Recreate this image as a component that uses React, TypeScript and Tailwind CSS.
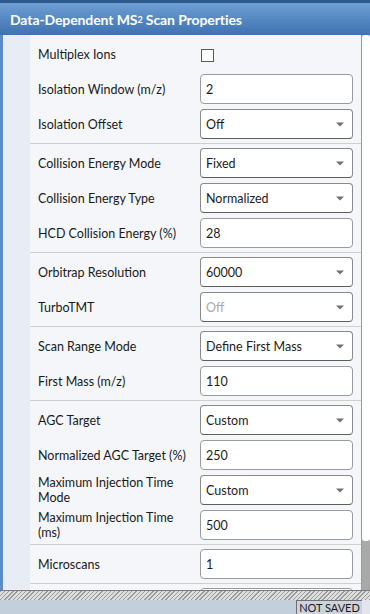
type Row = {
  label: string;
  kind: 'check' | 'input' | 'select';
  value?: string;
  disabled?: boolean;
};

const groups: Row[][] = [
  [
    { label: 'Multiplex Ions', kind: 'check' },
    { label: 'Isolation Window (m/z)', kind: 'input', value: '2' },
    { label: 'Isolation Offset', kind: 'select', value: 'Off' },
  ],
  [
    { label: 'Collision Energy Mode', kind: 'select', value: 'Fixed' },
    { label: 'Collision Energy Type', kind: 'select', value: 'Normalized' },
    { label: 'HCD Collision Energy (%)', kind: 'input', value: '28' },
  ],
  [
    { label: 'Orbitrap Resolution', kind: 'select', value: '60000' },
    { label: 'TurboTMT', kind: 'select', value: 'Off', disabled: true },
  ],
  [
    { label: 'Scan Range Mode', kind: 'select', value: 'Define First Mass' },
    { label: 'First Mass (m/z)', kind: 'input', value: '110' },
  ],
  [
    { label: 'AGC Target', kind: 'select', value: 'Custom' },
    { label: 'Normalized AGC Target (%)', kind: 'input', value: '250' },
    { label: 'Maximum Injection Time Mode', kind: 'select', value: 'Custom' },
    { label: 'Maximum Injection Time (ms)', kind: 'input', value: '500' },
  ],
  [{ label: 'Microscans', kind: 'input', value: '1' }],
  [{ label: '', kind: 'input', value: '' }],
];

function Control({ row }: { row: Row }) {
  if (row.kind === 'check') {
    return (
      <div className="w-[153px] h-[30px] flex items-center pl-[1px] pt-[3px]">
        <div className="w-[13px] h-[13px] border border-[#5a5a5a] bg-white" />
      </div>
    );
  }
  return (
    <div
      className={`w-[153px] h-[30px] flex items-center justify-between rounded-[4px] border bg-white pl-[5px] pr-[8px] ${
        row.kind === 'select' ? 'border-[#8a8a8a] border-b-[#5e5e5e]' : 'border-[#9a9a9a]'
      }`}
    >
      <span className={row.disabled ? 'text-[#a8a8a8]' : 'text-[#1c1c1c]'}>{row.value}</span>
      {row.kind === 'select' && (
        <svg width="8" height="5" viewBox="0 0 8 5">
          <path d="M0 0.5 L8 0.5 L4 4.5 Z" fill="#707070" />
        </svg>
      )}
    </div>
  );
}

export default function App() {
  return (
    <div
      className="w-[370px] h-[614px] flex flex-col overflow-hidden bg-[#f4f6f9] text-[12.5px] leading-[15px]"
      style={{ fontFamily: 'Lato, "Noto Sans", sans-serif' }}
    >
      <div className="h-[35px] shrink-0 border-t-[3px] border-[#2e5b8e] bg-gradient-to-b from-[#6e9fd4] to-[#3e72b1] flex items-center pl-[10px]">
        <span className="text-white text-[14px] font-bold tracking-[-0.1px]">
          Data-Dependent MS<sup className="text-[9px] relative -top-[2px]">2</sup> Scan Properties
        </span>
      </div>

      <div className="h-[555px] shrink-0 flex border-l-[3px] border-[#5b8cc7]">
        <div className="w-[27px] bg-[#e7ecf5]" />
        <div className="flex-1 overflow-hidden bg-[#f4f6f9]">
          {groups.map((g, gi) => (
            <div key={gi} className="flex flex-col gap-[5px] py-[4px] border-b border-[#cfcfcf]">
              {g.map((row, ri) => (
                <div key={ri} className="flex items-center h-[30px]">
                  <div className="w-[170px] pl-[8px] pr-[6px] text-[#1a1a1a]">{row.label}</div>
                  <Control row={row} />
                </div>
              ))}
            </div>
          ))}
        </div>
        <div className="w-[9px] bg-[#a9a9a9] border-l border-[#9a9a9a]">
          <div className="h-[506px] bg-white rounded-[3px]" />
        </div>
      </div>

      <div className="h-[10px] shrink-0 border-t border-[#7a7a7a] bg-[repeating-linear-gradient(135deg,#9a9a9a_0px,#9a9a9a_1px,#dedede_1px,#dedede_3px)]" />

      <div className="h-[14px] shrink-0 flex justify-end bg-[#c4cfdc] overflow-hidden">
        <div className="w-[66px] h-[14px] border-t border-l border-[#707070] bg-[#ccd3dc] text-[11px] leading-[13px] text-[#1a1a1a] text-center">
          NOT SAVED
        </div>
        <div className="w-[8px] bg-[#e2e6ec]" />
      </div>
    </div>
  );
}
